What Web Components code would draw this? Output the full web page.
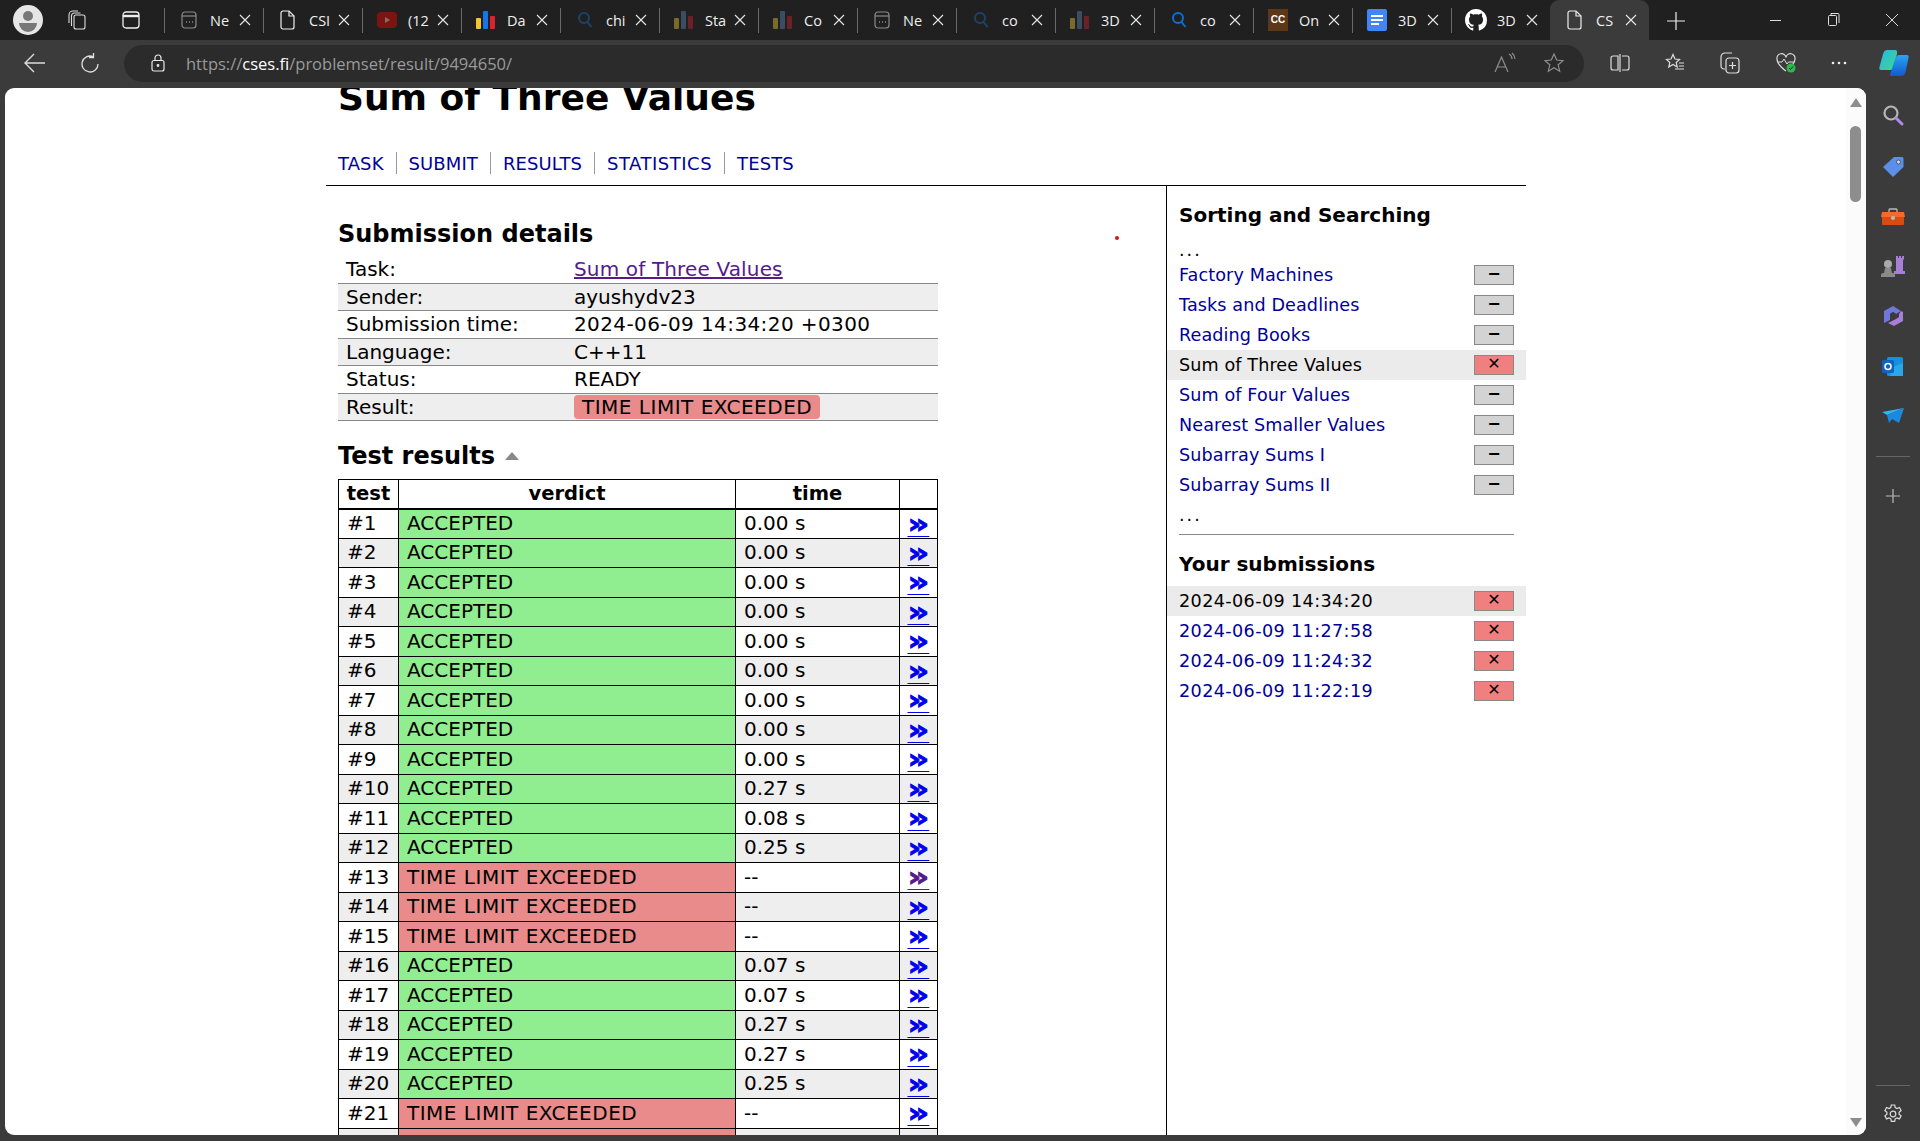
<!DOCTYPE html>
<html lang="en"><head><meta charset="utf-8"><title>CSES</title>
<style>
html,body{margin:0;padding:0;height:100%;overflow:hidden;background:#3b3b3b}
</style></head>
<body>
<browser-shell>
  <tab-strip></tab-strip>
  <tool-bar></tool-bar>
  <page-frame>
    <cses-page></cses-page>
  </page-frame>
</browser-shell>
<script>
const I={
 newt:'<svg width="16" height="18" viewBox="0 0 16 18" fill="none" stroke="currentColor" stroke-width="1.2"><rect x="1" y="1" width="14" height="16" rx="3"/><path d="M1 5h14"/><path d="M5 11h1M8 11h1M11 11h1" stroke-width="1.4"/></svg>',
 doc:'<svg width="16" height="20" viewBox="0 0 16 20" fill="none" stroke="currentColor" stroke-width="1.2"><path d="M3 1h6l5 5v11a2 2 0 0 1-2 2H3a2 2 0 0 1-2-2V3a2 2 0 0 1 2-2z"/><path d="M9 1v5h5"/></svg>',
 yt:'<svg width="20" height="16" viewBox="0 0 20 16"><rect width="20" height="16" rx="4" fill="#7c1512"/><path d="M8 5l5 3-5 3z" fill="#8c6a68"/></svg>',
 bars:'<svg width="20" height="20" viewBox="0 0 20 20"><rect x="0" y="8" width="5" height="11" rx="1" fill="#f4c430"/><rect x="7" y="1" width="5" height="18" rx="1" fill="#1a73e8"/><rect x="14" y="6" width="5" height="13" rx="1" fill="#d9232e"/></svg>',
 barsd:'<svg width="20" height="20" viewBox="0 0 20 20"><rect x="0" y="8" width="5" height="11" rx="1" fill="#7a6a2c"/><rect x="7" y="1" width="5" height="18" rx="1" fill="#3a4d63"/><rect x="14" y="6" width="5" height="13" rx="1" fill="#6b2226"/></svg>',
 mag:'<svg width="18" height="18" viewBox="0 0 18 18" fill="none" stroke="currentColor" stroke-width="2"><circle cx="8" cy="7" r="5"/><path d="M11.5 11l4 5"/></svg>',
 cc:'<span class="cc">CC</span>',
 gdoc:'<svg width="20" height="22" viewBox="0 0 20 22"><rect width="20" height="22" rx="2" fill="#4285f4"/><path d="M4 6h12v2H4zM4 10h12v2H4zM4 14h8v2H4z" fill="#fff"/></svg>',
 gh:'<svg width="22" height="22" viewBox="0 0 16 16" fill="#fff"><path d="M8 0C3.58 0 0 3.58 0 8c0 3.54 2.29 6.53 5.47 7.59.4.07.55-.17.55-.38 0-.19-.01-.82-.01-1.49-2.01.37-2.53-.49-2.69-.94-.09-.23-.48-.94-.82-1.13-.28-.15-.68-.52-.01-.53.63-.01 1.08.58 1.23.82.72 1.21 1.87.87 2.33.66.07-.52.28-.87.51-1.07-1.78-.2-3.64-.89-3.64-3.95 0-.87.31-1.59.82-2.15-.08-.2-.36-1.02.08-2.12 0 0 .67-.21 2.2.82.64-.18 1.32-.27 2-.27s1.36.09 2 .27c1.53-1.04 2.2-.82 2.2-.82.44 1.1.16 1.92.08 2.12.51.56.82 1.27.82 2.15 0 3.07-1.87 3.75-3.65 3.95.29.25.54.73.54 1.48 0 1.07-.01 1.93-.01 2.2 0 .21.15.46.55.38A8.01 8.01 0 0 0 16 8c0-4.42-3.58-8-8-8z"/></svg>'
};
function def(name,css,html,init){
  customElements.define(name,class extends HTMLElement{
    connectedCallback(){
      if(this.shadowRoot)return;
      const s=this.attachShadow({mode:'open'});
      s.innerHTML='<style>'+css+'</style>'+(typeof html==='function'?html(this):html);
      if(init)init(this,s);
    }
  });
}
def('browser-shell',':host{display:flex;flex-direction:column;width:1920px;height:1141px;overflow:hidden;background:#3b3b3b}','<slot></slot>');

const TABS=[['newt','Ne','#8a8a8a'],['doc','CSI','#eee'],['yt','(12',''],['bars','Da',''],['mag','chi','#1d4468'],['barsd','Sta',''],['barsd','Co',''],['newt','Ne','#8a8a8a'],['mag','co','#1d4468'],['barsd','3D',''],['mag','co','#0a6fd0'],['cc','On',''],['gdoc','3D',''],['gh','3D',''],['doc','CS','#eee']];
def('browser-tab',`:host{display:flex;align-items:center;width:99px;height:40px;position:relative;box-sizing:border-box;color:#eee;font:14.500px "Open Sans",sans-serif;flex:none}
:host(:not([first]):not([active])):before{content:"";position:absolute;left:0;top:8px;bottom:7px;width:1px;background:#6a6a6a}
:host([active]){background:#3b3b3b;border-radius:9px 9px 0 0}
.ic{width:24px;margin-left:13px;flex:none;display:flex;justify-content:center;color:var(--c,#eee)}
.t{width:26px;margin-left:9px;white-space:nowrap;flex:none}
.x{width:12px;height:12px;margin-left:3px;flex:none}
.cc{display:block;width:20px;height:22px;background:#5c3718;color:#fff;font:bold 10px/22px "Liberation Sans",sans-serif;text-align:center}`,
 h=>`<span class="ic" style="--c:${h.dataset.c}">${I[h.dataset.i]}</span><span class="t">${h.dataset.t}</span><svg class="x" viewBox="0 0 12 12" stroke="#e8e8e8" stroke-width="1.1"><path d="M1 1l10 10M11 1L1 11"/></svg>`);
def('tab-strip',`:host{display:flex;align-items:stretch;height:40px;background:#202020;color:#eee;flex:none}
.avatar{width:30px;height:30px;border-radius:50%;background:#e6e6e6;margin:5px 0 0 13px;flex:none;display:block}
.sq{margin:10px 0 0 25px;flex:none}
.sep{width:1px;background:#6a6a6a;margin:8px 0 7px 24px;flex:none}
.sq2{margin:11px 0 0 36px;flex:none}
.tabs{display:flex;flex:none;margin-left:-1px}
.plus{margin:12px 0 0 18px;flex:none}
.wc{display:flex;margin-left:auto;flex:none}
.wc svg{width:58px;height:40px}
`,
 ()=>`<svg class="avatar" viewBox="0 0 30 30"><circle cx="15" cy="11" r="5" fill="#777"/><path d="M6 18h18a9 9 0 0 1-18 0z" fill="#777"/></svg>
 <svg class="sq" width="18" height="20" viewBox="0 0 18 20" fill="none" stroke="#ddd" stroke-width="1.1"><rect x="6" y="5" width="11" height="14" rx="2"/><path d="M3.5 16V6a3 3 0 0 1 3-3h6M1 13V5a4 4 0 0 1 4-4h5"/></svg>
 <svg class="sq2" width="18" height="18" viewBox="0 0 18 18" fill="none" stroke="#eee" stroke-width="1.3"><rect x="1" y="1" width="16" height="16" rx="3"/><path d="M1 5h16" stroke-width="2.4"/></svg>
 <span class="sep"></span>
 <div class="tabs">${TABS.map((t,i)=>`<browser-tab ${i==0?'first':''} ${i==14?'active':''} data-i="${t[0]}" data-t="${t[1]}" data-c="${t[2]}"></browser-tab>`).join('')}</div>
 <svg class="plus" width="18" height="18" viewBox="0 0 18 18" stroke="#eee" stroke-width="1.2"><path d="M9 0v18M0 9h18"/></svg>
 <div class="wc">
  <svg viewBox="0 0 58 40" stroke="#ddd" fill="none"><path d="M24 20.5h11"/></svg>
  <svg viewBox="0 0 58 40" stroke="#ddd" fill="none"><rect x="24.5" y="15.5" width="8" height="10" rx="1"/><path d="M27 15v-1.500h7a1 1 0 0 1 1 1V23"/></svg>
  <svg viewBox="0 0 58 40" stroke="#ddd" fill="none" style="width:58px"><path d="M24 14l12 12M36 14L24 26"/></svg>
 </div>`);

def('tool-bar',`:host{display:flex;align-items:center;height:48px;background:#3b3b3b;flex:none;box-sizing:border-box;padding-bottom:2px;color:#ddd}
.back{margin-left:24px;flex:none}.rel{margin-left:34px;flex:none}
.addr{margin-left:24px;flex:none;width:1460px;height:37px;border-radius:19px;background:#2b2b2b;display:flex;align-items:center}
.lock{margin-left:27px;flex:none}
.url{margin-left:21px;font:16.500px "Open Sans",sans-serif;color:#9a9a9a;white-space:nowrap}
.url b{font-weight:400;color:#fff}
.aa{margin-left:auto;margin-right:26px;display:flex}
.star{margin-right:19px}
.r{display:flex;align-items:center;flex:none}
.r>*{flex:none}
`,
 ()=>`<svg class="back" width="22" height="20" viewBox="0 0 22 20" fill="none" stroke="#ddd" stroke-width="1.4"><path d="M21 10H2M10 1l-9 9 9 9"/></svg>
 <svg class="rel" width="20" height="20" viewBox="0 0 20 20" fill="none" stroke="#ddd" stroke-width="1.3"><path d="M18 11a8 8 0 1 1-5-7.400M13.500 0v4.500H9"/></svg>
 <div class="addr">
  <svg class="lock" width="14" height="18" viewBox="0 0 14 18" fill="none" stroke="#e8e8e8" stroke-width="1.2"><rect x="1" y="6.500" width="12" height="10.500" rx="2"/><path d="M4 6.500V4a3 3 0 0 1 6 0v2.500"/><circle cx="7" cy="11.500" r=".8" fill="#e8e8e8"/></svg>
  <span class="url">https://<b>cses.fi</b>/problemset/result/9494650/</span>
  <span class="aa"><svg width="24" height="22" viewBox="0 0 24 22" fill="none" stroke="#8e8e8e" stroke-width="1.2"><path d="M2 20L8.500 5 15 20M4.500 15h8M16 2a6 6 0 0 1 3 5M19 1a8 8 0 0 1 3 6"/></svg></span>
  <svg class="star" width="22" height="22" viewBox="0 0 22 22" fill="none" stroke="#8e8e8e" stroke-width="1.2"><path d="M11 2l2.700 6 6.300.6-4.800 4.200 1.500 6.400L11 15.800 5.300 19.200l1.500-6.400L2 8.600 8.300 8z"/></svg>
 </div>
 <div class="r">
  <svg style="margin-left:26px" width="20" height="20" viewBox="0 0 20 20" fill="none" stroke="#ddd" stroke-width="1.2"><path d="M8 3H3a2 2 0 0 0-2 2v10a2 2 0 0 0 2 2h5zM12 3h5a2 2 0 0 1 2 2v10a2 2 0 0 1-2 2h-5M10 1v18"/></svg>
  <svg style="margin-left:35px" width="20" height="20" viewBox="0 0 20 20" fill="none" stroke="#ddd" stroke-width="1.2"><path d="M8 1.500l2 4.500 4.500.5-3.300 3 1 4.500-4.200-2.500-4.200 2.500 1-4.500-3.300-3L6 6zM14 10h5M14 13h5M10 16h9"/></svg>
  <svg style="margin-left:35px" width="20" height="22" viewBox="0 0 20 22" fill="none" stroke="#ddd" stroke-width="1.2"><path d="M5 17H4a3 3 0 0 1-3-3V5a4 4 0 0 1 4-4h7"/><rect x="6" y="6" width="13" height="15" rx="3"/><path d="M12.500 10v7M9 13.500h7"/></svg>
  <svg style="margin-left:35px" width="22" height="22" viewBox="0 0 22 22" fill="none"><path d="M11 19S2 13 2 7a4.500 4.500 0 0 1 9-1.500A4.500 4.500 0 0 1 20 7c0 2-1 4-2.500 5.500" stroke="#ddd" stroke-width="1.2"/><path d="M3 10h4l2-3 3 5 1.500-2H19" stroke="#ddd" stroke-width="1"/><circle cx="16" cy="16" r="4.500" fill="#2db84d"/><path d="M14 16l1.500 1.500 2.500-3" stroke="#123" stroke-width="1"/></svg>
  <svg style="margin-left:33px" width="18" height="4" viewBox="0 0 18 4" fill="#eee"><circle cx="3" cy="2" r="1.300"/><circle cx="9" cy="2" r="1.300"/><circle cx="15" cy="2" r="1.300"/></svg>
  <svg style="margin-left:31px" width="30" height="28" viewBox="0 0 30 28"><defs><linearGradient id="g1" x1="0" y1="0" x2="1" y2="1"><stop offset="0" stop-color="#28b6e8"/><stop offset="1" stop-color="#3fd98a"/></linearGradient><linearGradient id="g2" x1="0" y1="0" x2="0" y2="1"><stop offset="0" stop-color="#2aa4f0"/><stop offset="1" stop-color="#1358d0"/></linearGradient></defs><path d="M8 1h8c2 0 2.500 2 2 4l-4 14c-.6 2-2 2-4 2H2c-1.500 0-2-1-1.500-3L4 5c.6-2 2-4 4-4z" fill="url(#g1)"/><path d="M20 6h8c1.500 0 2 1 1.500 3l-3 14c-.5 3-2.500 4-5 4h-9c-2 0-2-1-1-3l5-15c.8-2 2-3 3.500-3z" fill="url(#g2)"/></svg>
 </div>`);

def('scroll-rail',`:host{display:flex;flex-direction:column;align-items:center;width:20px;flex:none;background:#fbfbfb;box-sizing:border-box;padding:10px 4px 8px 3px}
.up,.dn{width:0;height:0;border-left:6px solid transparent;border-right:6px solid transparent;flex:none}
.up{border-bottom:9px solid #8d8d8d}.dn{border-top:9px solid #8d8d8d;margin-top:auto}
.th{width:11px;height:76px;border-radius:6px;background:#8d8d8d;margin-top:19px;flex:none}`,
 '<div class="up"></div><div class="th"></div><div class="dn"></div>');
def('side-rail',`:host{display:flex;flex-direction:column;align-items:center;width:54px;flex:none;background:#3b3b3b;box-sizing:border-box;padding-bottom:17px;margin-top:-1px}
svg{flex:none;display:block}
.sep{width:34px;height:1px;background:#666;flex:none}`,
 ()=>`<svg style="margin-top:17px" width="22" height="22" viewBox="0 0 22 22" fill="none"><circle cx="9" cy="9" r="6.500" stroke="#b5b5b5" stroke-width="2.200"/><path d="M14 14l6 6" stroke="#b08ae6" stroke-width="3" stroke-linecap="round"/></svg>
 <svg style="margin-top:30px" width="22" height="22" viewBox="0 0 22 22"><path d="M12 1h8a1.500 1.500 0 0 1 1.500 1.500V11L11 21 1 11z" fill="#5b8fe8"/><circle cx="16.500" cy="6" r="2" fill="#ddd" stroke="#345" stroke-width=".8"/></svg>
 <svg style="margin-top:30px" width="24" height="18" viewBox="0 0 24 18"><path d="M8 4V2a1 1 0 0 1 1-1h6a1 1 0 0 1 1 1v2" fill="none" stroke="#bbb" stroke-width="1.300"/><path d="M1 4h22l1 5H0z" fill="#f26b2b"/><path d="M1 9h22v7a1 1 0 0 1-1 1H2a1 1 0 0 1-1-1z" fill="#d84c14"/><circle cx="12" cy="10" r="2" fill="#bbb"/></svg>
 <svg style="margin-top:29px" width="24" height="24" viewBox="0 0 24 24"><rect x="15" y="1" width="2" height="3" fill="#a77fd8"/><rect x="18" y="1" width="2" height="3" fill="#a77fd8"/><rect x="21" y="1" width="2" height="3" fill="#a77fd8"/><path d="M15 3h8l-1 3v10h2v3H13v-3h2V6z" fill="#a77fd8"/><circle cx="7" cy="9" r="4" fill="#a9a9a9"/><path d="M4 13h6l1 5H3zM0 20c0-1 1-2 2-2h10c1 0 2 1 2 2v2H0z" fill="#8a8a8a"/></svg>
 <svg style="margin-top:26px" width="22" height="22" viewBox="0 0 22 22"><path d="M11 1l8 5-5 3-3-2-3 2v6l-6 3V6z" fill="#6f77d8"/><path d="M19 6l2 1v9l-9 5-6-3 8-4 3-2v-3z" fill="#a77fd8"/><path d="M8 9l3-2 3 2v4l-3 2-3-2z" fill="#3b3b3b"/></svg>
 <svg style="margin-top:30px" width="22" height="20" viewBox="0 0 22 20"><rect x="5" y="0" width="16" height="19" rx="1.500" fill="#1490df"/><path d="M11 10l10-4v13H8z" fill="#28a8ea"/><rect x="0" y="3" width="12" height="13" rx="1.500" fill="#0a64c2"/><circle cx="6" cy="9.500" r="3" fill="none" stroke="#fff" stroke-width="1.500"/></svg>
 <svg style="margin-top:31px" width="22" height="16" viewBox="0 0 22 16"><path d="M0 4L22 0 5 7z" fill="#2fb5f0"/><path d="M22 0L5 7l2 8 3-4 7 4z" fill="#1a8ae0"/></svg>
 <div class="sep" style="margin-top:32px"></div>
 <svg style="margin-top:32px" width="14" height="14" viewBox="0 0 14 14" stroke="#bbb" stroke-width="1.200"><path d="M7 0v14M0 7h14"/></svg>
 <div class="sep" style="margin-top:auto"></div>
 <svg style="margin-top:18px" width="20" height="20" viewBox="0 0 20 20" fill="none" stroke="#ddd" stroke-width="1.200"><circle cx="10" cy="10" r="2.800"/><path d="M8.300 1h3.400l.5 2.600 1.800.9 2.400-1 1.700 3-2 1.700v2l2 1.700-1.700 3-2.400-1-1.800.9-.5 2.600H8.300l-.5-2.600-1.800-.9-2.400 1-1.700-3 2-1.700v-2l-2-1.700 1.700-3 2.400 1 1.800-.9z"/></svg>`);
def('page-frame',`:host{display:flex;flex:1;min-height:0}
.win{flex:1;min-width:0;margin:0 0 6px 5px;background:#fff;border-radius:9px;overflow:hidden;display:flex}
.view{flex:1;min-width:0;overflow:hidden}`,
 `<div class="win"><div class="view"><slot></slot></div><scroll-rail></scroll-rail></div><side-rail></side-rail>`);

const font='"DejaVu Sans","Liberation Sans",sans-serif';
const NAV=['TASK','SUBMIT','RESULTS','STATISTICS','TESTS'];
def('cses-page',`:host{display:block;width:1200px;margin:-10px 0 0 321px;font:20px/1.2 ${font};color:#000}
h1{font:bold 36px/40px ${font};margin:0 0 0 12px}
nav{display:flex;padding:34px 0 11px 12px;border-bottom:1px solid #000}
nav a{font-size:18px;line-height:22px;letter-spacing:.1px;color:#000099;text-decoration:none;padding:1px 12px 0;height:21px;border-left:1px solid #999}
nav a:first-child{padding-left:0;border-left:0}
nav a.w{letter-spacing:.5px}
.cols{display:flex;align-items:stretch;height:1000px}
main{width:840px;flex:none;box-sizing:border-box;padding-left:12px}
aside{width:360px;flex:none;box-sizing:border-box;border-left:1px solid #000;padding:14px 12px 0}`,
 `<h1>Sum of Three Values</h1><nav>${NAV.map(n=>`<a href="#" class="${n=='STATISTICS'?'w':''}">${n}</a>`).join('')}</nav>
 <div class="cols"><main><sub-details></sub-details><test-results></test-results></main><aside><task-list></task-list></aside></div>
 <span style="position:absolute;left:1115px;top:236px;width:4px;height:4px;border-radius:50%;background:#d01818"></span>`);
const DET=[['Task:','<a href="#">Sum of Three Values</a>'],['Sender:','ayushydv23'],['Submission time:','<span class="n">2024-06-09 14:34:20 +0300</span>'],['Language:','C++11'],['Status:','READY'],['Result:','<span class="bad">TIME LIMIT EXCEEDED</span>']];
def('sub-details',`:host{display:block}
h2{font:bold 24px/30px ${font};margin:33px 0 7px}
.g{width:600px;display:grid;grid-template-columns:236px 1fr;grid-auto-rows:27.500px}
.c{box-sizing:border-box;border-bottom:1px solid #888;display:flex;align-items:center;white-space:nowrap}
.c:nth-child(odd){padding-left:8px}
.e{background:#eee}
a{color:#551a8b;letter-spacing:.15px}
.n{letter-spacing:.4px}
.bad{background:#e98b8b;border-radius:4px;padding:0 8px;line-height:24px;display:block;letter-spacing:.5px}`,
 `<h2>Submission details</h2><div class="g">${DET.map((r,i)=>`<div class="c ${i%2?'e':''}">${r[0]}</div><div class="c ${i%2?'e':''}">${r[1]}</div>`).join('')}</div>`);
const T='TIME LIMIT EXCEEDED';
const TESTS=['0.00','0.00','0.00','0.00','0.00','0.00','0.00','0.00','0.00','0.27','0.08','0.25',null,null,null,'0.07','0.07','0.27','0.27','0.25',null,null];
def('test-results',`:host{display:block}
h2{font:bold 24px/30px ${font};margin:20px 0 8px;display:flex;align-items:center}
.tri{width:0;height:0;border-left:7px solid transparent;border-right:7px solid transparent;border-bottom:8px solid #888;margin-left:10px}
table{border-collapse:collapse;table-layout:fixed;width:599px}
th,td{border:1px solid #000;padding:0 0 1px 8px;text-align:left;white-space:nowrap}
th{height:27.500px;text-align:center;padding:0;font-size:19.500px;font-weight:bold;border-bottom-width:2px}
td{box-sizing:border-box;height:29.500px}
tr:nth-child(even) td{background:#eee}
td.ok{background:#90ee90 !important}
td.no{background:#e98b8b !important;letter-spacing:.5px}
td.l{text-align:center;padding:0}
a{font-weight:bold;color:#0000ee;font-size:26px;line-height:26px;height:26px;display:inline-block;text-decoration-thickness:1px;text-underline-offset:3px;vertical-align:top;transform:scaleX(1.3);-webkit-text-stroke:.8px currentColor}
a.v{color:#551a8b}`,
 `<h2>Test results<span class="tri"></span></h2><table><colgroup><col style="width:60px"><col style="width:337px"><col style="width:164px"><col style="width:38px"></colgroup><thead><tr><th>test</th><th>verdict</th><th>time</th><th></th></tr></thead><tbody>${TESTS.map((t,i)=>`<tr><td>#${i+1}</td><td class="${t?'ok':'no'}">${t?'ACCEPTED':T}</td><td>${t?t+' s':'--'}</td><td class="l"><a href="#" class="${i==12?'v':''}">»</a></td></tr>`).join('')}</tbody></table>`);
const TASKS=[['Factory Machines',0],['Tasks and Deadlines',0],['Reading Books',0],['Sum of Three Values',1,1],['Sum of Four Values',0],['Nearest Smaller Values',0],['Subarray Sums I',0],['Subarray Sums II',0]];
const SUBS=[['2024-06-09 14:34:20',1,1],['2024-06-09 11:27:58',1],['2024-06-09 11:24:32',1],['2024-06-09 11:22:19',1]];
const row=r=>`<div class="row ${r[2]?'cur':''}">${r[2]?`<span>${r[0]}</span>`:`<a href="#">${r[0]}</a>`}<span class="box ${r[1]?'x':''}">${r[1]?'✕':'−'}</span></div>`;
def('task-list',`:host{display:block;font:17.600px/30px ${font};letter-spacing:.1px}
h3{font:bold 20px/30px ${font};margin:0;letter-spacing:0}
.dots{height:30px;line-height:40px;letter-spacing:2px}
.dots2{height:34px;line-height:30px;border-bottom:1px solid #888;letter-spacing:2px}
.row{display:flex;justify-content:space-between;align-items:center;height:30px;margin:0 -12px;padding:0 12px}
.cur{background:#ebebeb}
a{color:#000099;text-decoration:none}
.box{width:40px;height:20px;box-sizing:border-box;border:1px solid #888;background:#d3d3d3;font:bold 16px/15px ${font};letter-spacing:0;text-align:center;flex:none}
.box.x{background:#f08080;font-weight:normal;font-size:16px;line-height:16px}
.h2{margin-top:14px;margin-bottom:7px}
.s{letter-spacing:.38px}`,
 `<h3>Sorting and Searching</h3><div class="dots">...</div>${TASKS.map(row).join('')}<div class="dots2">...</div><h3 class="h2">Your submissions</h3><div class="s">${SUBS.map(row).join('')}</div>`);
</script>
</body></html>
